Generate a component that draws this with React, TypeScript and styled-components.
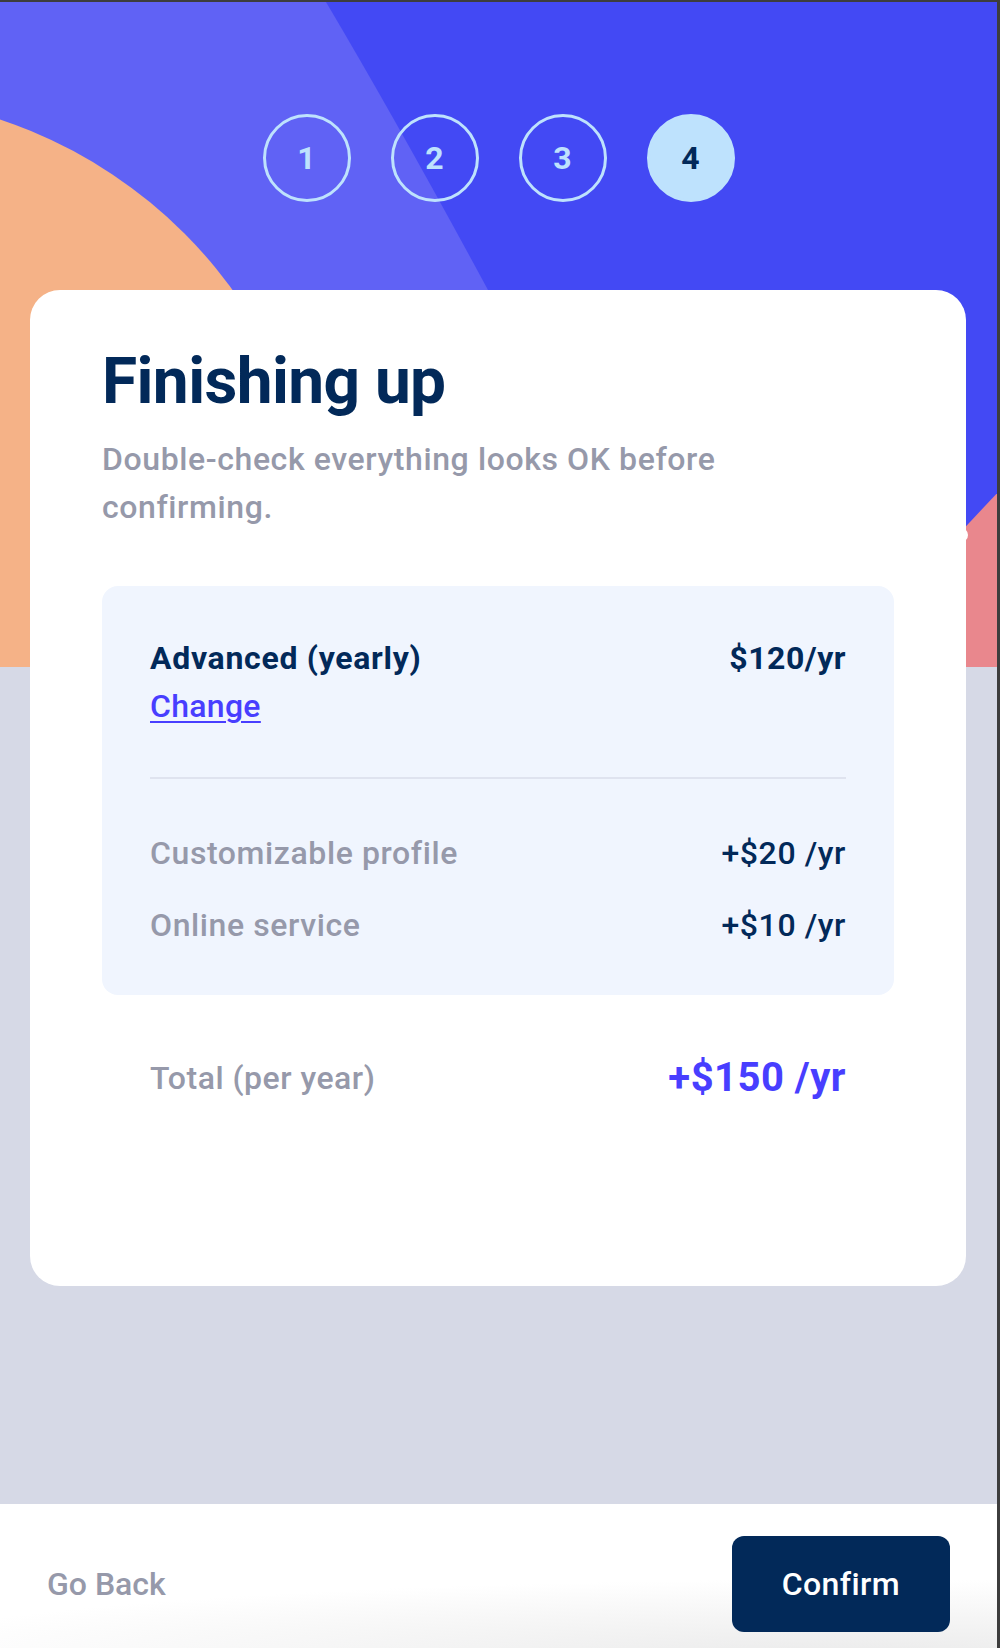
import React from "react";
import styled, { createGlobalStyle } from "styled-components";

const GlobalStyle = createGlobalStyle`
  html, body {
    margin: 0;
    padding: 0;
    background: #3d3d3d;
  }
  body {
    font-family: Roboto, "Open Sans", sans-serif;
    -webkit-font-smoothing: antialiased;
  }
  #root {
    padding: 2px 3px 0 0;
  }
  *, *::before, *::after {
    box-sizing: border-box;
  }
`;

const Page = styled.div`
  width: 997px;
  min-height: 1646px;
  display: flex;
  flex-direction: column;
  background: #d6d9e6;
`;

const Hero = styled.header`
  position: relative;
  height: 665px;
  flex-shrink: 0;
  overflow: hidden;
  display: flex;
  justify-content: center;
  align-items: flex-start;
  padding-top: 112px;
`;

const HeroArt = styled.svg`
  position: absolute;
  inset: 0;
  width: 100%;
  height: 100%;
  display: block;
  z-index: 0;
`;

const Steps = styled.ol`
  position: relative;
  z-index: 1;
  display: flex;
  gap: 40px;
  list-style: none;
  margin: 0;
  padding: 0;
`;

const Step = styled.li<{ $active?: boolean }>`
  width: 88px;
  height: 88px;
  border-radius: 50%;
  border: 3px solid #bee2fd;
  display: flex;
  align-items: center;
  justify-content: center;
  font-size: 32px;
  font-weight: 700;
  color: ${(p) => (p.$active ? "#022959" : "#bee2fd")};
  background: ${(p) => (p.$active ? "#bee2fd" : "transparent")};
`;

const Card = styled.main`
  position: relative;
  z-index: 1;
  margin: -377px 31px 0 30px;
  background: #ffffff;
  border-radius: 30px;
  padding: 54px 72px 178px;
`;

const Title = styled.h1`
  margin: 0 0 14px;
  font-size: 64px;
  line-height: 1.2;
  font-weight: 700;
  letter-spacing: -0.6px;
  color: #022959;
`;

const Subtitle = styled.p`
  margin: 0;
  max-width: 660px;
  font-size: 32px;
  line-height: 48px;
  font-weight: 500;
  letter-spacing: 0.6px;
  color: #9699aa;
`;

const Summary = styled.section`
  margin-top: 55px;
  background: #f0f5fe;
  border-radius: 16px;
  padding: 48px 48px 46px;
`;

const PlanRow = styled.div`
  display: flex;
  justify-content: space-between;
  align-items: flex-start;
`;

const PlanInfo = styled.div`
  display: flex;
  flex-direction: column;
`;

const PlanName = styled.span`
  font-size: 32px;
  line-height: 48px;
  font-weight: 700;
  letter-spacing: 0.7px;
  color: #022959;
`;

const ChangeLink = styled.a`
  font-size: 32px;
  line-height: 48px;
  font-weight: 500;
  letter-spacing: 0.3px;
  color: #483eff;
  text-decoration: underline;
  text-underline-offset: 4px;
  text-decoration-thickness: 2px;
  align-self: flex-start;
  cursor: pointer;
`;

const PlanPrice = styled.span`
  font-size: 32px;
  line-height: 48px;
  font-weight: 700;
  letter-spacing: 0.5px;
  color: #022959;
`;

const Divider = styled.hr`
  margin: 47px 0 0;
  border: none;
  height: 2px;
  background: #dfe3ef;
`;

const AddonList = styled.ul`
  list-style: none;
  margin: 50px 0 0;
  padding: 0;
  display: flex;
  flex-direction: column;
  gap: 24px;
`;

const AddonRow = styled.li`
  display: flex;
  justify-content: space-between;
  font-size: 32px;
  line-height: 48px;
  font-weight: 500;
  letter-spacing: 0.6px;
`;

const AddonName = styled.span`
  color: #9699aa;
`;

const AddonPrice = styled.span`
  color: #022959;
`;

const TotalRow = styled.div`
  margin-top: 53px;
  padding: 0 48px;
  display: flex;
  justify-content: space-between;
  align-items: center;
`;

const TotalLabel = styled.span`
  font-size: 32px;
  line-height: 48px;
  font-weight: 500;
  letter-spacing: 0.5px;
  color: #9699aa;
`;

const TotalPrice = styled.span`
  font-size: 40px;
  line-height: 60px;
  font-weight: 700;
  letter-spacing: 0.5px;
  color: #483eff;
`;

const Footer = styled.footer`
  margin-top: auto;
  height: 144px;
  flex-shrink: 0;
  padding: 32px 47px 16px;
  display: flex;
  justify-content: space-between;
  align-items: center;
  background: radial-gradient(140% 75% at 85% 105%, #ebebeb 0%, #ffffff 70%);
`;

const BackButton = styled.button`
  border: none;
  background: none;
  padding: 0;
  font-family: inherit;
  font-size: 32px;
  font-weight: 500;
  color: #9699aa;
  cursor: pointer;
`;

const ConfirmButton = styled.button`
  height: 96px;
  padding: 0 50px;
  border: none;
  border-radius: 12px;
  background: #022959;
  color: #ffffff;
  font-family: inherit;
  font-size: 32px;
  font-weight: 500;
  letter-spacing: 0.4px;
  cursor: pointer;
`;

const addons = [
  { name: "Customizable profile", price: "+$20 /yr" },
  { name: "Online service", price: "+$10 /yr" },
];

export default function App() {
  return (
    <>
      <GlobalStyle />
      <Page>
        <Hero>
          <HeroArt viewBox="0 0 997 665" preserveAspectRatio="none" aria-hidden="true">
            <rect width="997" height="665" fill="#4349f4" />
            <path d="M0 0 H326 Q400 125 488 288 L640 665 H0 Z" fill="#6062f5" />
            <circle cx="-150" cy="566" r="473" fill="#f5b287" />
            <path d="M1000 488 L880 616 L880 665 H1000 Z" fill="#e9878d" />
            <circle cx="961" cy="533" r="7" fill="#ffffff" />
          </HeroArt>
          <Steps>
            <Step>1</Step>
            <Step>2</Step>
            <Step>3</Step>
            <Step $active>4</Step>
          </Steps>
        </Hero>
        <Card>
          <Title>Finishing up</Title>
          <Subtitle>Double-check everything looks OK before confirming.</Subtitle>
          <Summary>
            <PlanRow>
              <PlanInfo>
                <PlanName>Advanced (yearly)</PlanName>
                <ChangeLink>Change</ChangeLink>
              </PlanInfo>
              <PlanPrice>$120/yr</PlanPrice>
            </PlanRow>
            <Divider />
            <AddonList>
              {addons.map((a) => (
                <AddonRow key={a.name}>
                  <AddonName>{a.name}</AddonName>
                  <AddonPrice>{a.price}</AddonPrice>
                </AddonRow>
              ))}
            </AddonList>
          </Summary>
          <TotalRow>
            <TotalLabel>Total (per year)</TotalLabel>
            <TotalPrice>+$150 /yr</TotalPrice>
          </TotalRow>
        </Card>
        <Footer>
          <BackButton>Go Back</BackButton>
          <ConfirmButton>Confirm</ConfirmButton>
        </Footer>
      </Page>
    </>
  );
}
